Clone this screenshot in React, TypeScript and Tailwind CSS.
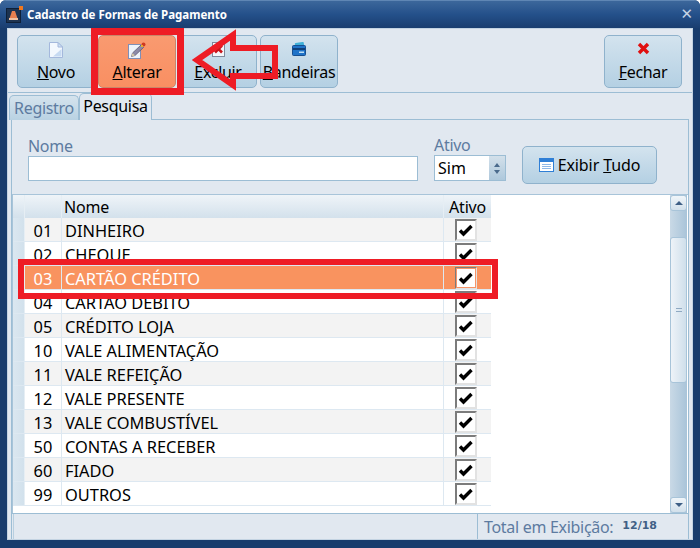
import React from "react";

const rows: [string, string][] = [
  ["01", "DINHEIRO"],
  ["02", "CHEQUE"],
  ["03", "CARTÃO CRÉDITO"],
  ["04", "CARTÃO DÉBITO"],
  ["05", "CRÉDITO LOJA"],
  ["10", "VALE ALIMENTAÇÃO"],
  ["11", "VALE REFEIÇÃO"],
  ["12", "VALE PRESENTE"],
  ["13", "VALE COMBUSTÍVEL"],
  ["50", "CONTAS A RECEBER"],
  ["60", "FIADO"],
  ["99", "OUTROS"],
];

function Check({ selected }: { selected: boolean }) {
  return (
    <div className={`relative mt-[1px] ml-[11px] w-[22px] h-[22px] border-2 bg-white border-t-[#7c7c7c] border-l-[#7c7c7c] border-r-[#e2e2e2] border-b-[#e2e2e2] ${selected ? "outline outline-1 -outline-offset-2 outline-[#f79468]" : ""}`}>
      <svg width="18" height="18" viewBox="0 0 18 18" className="absolute left-0 top-0">
        <path d="M3 9.500 L6.500 13 L14.500 5" fill="none" stroke="#000" strokeWidth="3.400" />
      </svg>
    </div>
  );
}

function NovoIcon() {
  return (
    <svg width="14" height="16" viewBox="0 0 14 16">
      <path d="M0.500 0.500H9L13.500 5V15.500H0.500Z" fill="#f3f8fe" stroke="#a4b8dc" />
      <path d="M9 0.500V5H13.500Z" fill="#cfe0f4" stroke="#a4b8dc" />
      <path d="M4 14.500L12.500 7V14.500Z" fill="#c6daf2" />
    </svg>
  );
}
function AlterarIcon() {
  return (
    <svg width="18" height="17" viewBox="0 0 18 17">
      <rect x="0.500" y="2.500" width="12" height="14" fill="#eef3fb" stroke="#7f8fb8" />
      <path d="M3.500 14.500L4.500 11L13 3L15.500 5.500L7 13.500Z" fill="#8d8aa8" stroke="#55506a" strokeWidth="0.700" />
      <path d="M3.500 14.500L4.500 11L7 13.500Z" fill="#d9c9a8" />
      <circle cx="15.500" cy="2.500" r="2" fill="#cf3a22" />
      <rect x="13" y="3" width="2" height="2" fill="#e0b030" />
    </svg>
  );
}
function ExcluirIcon() {
  return (
    <svg width="13" height="15" viewBox="0 0 13 15">
      <rect x="0.500" y="0.500" width="12" height="14" fill="#f4f7fb" stroke="#7f8a9c" />
      <path d="M3 3.500L10 10.500M10 3.500L3 10.500" stroke="#c8141a" strokeWidth="2.600" />
    </svg>
  );
}
function BandeirasIcon() {
  return (
    <svg width="14" height="14" viewBox="0 0 14 14">
      <rect x="3" y="0.500" width="9" height="6" rx="1" fill="#3fb0d8" transform="rotate(-8 7 3)" />
      <rect x="0.500" y="3.500" width="13" height="10" rx="1" fill="#1f73c8" stroke="#174f90" />
      <rect x="1" y="6" width="12" height="2" fill="#0f3f78" />
      <rect x="7" y="9.500" width="5" height="1.500" fill="#bfe0f5" />
    </svg>
  );
}
function FecharIcon() {
  return (
    <svg width="13" height="13" viewBox="0 0 13 13">
      <path d="M2 2L11 11M11 2L2 11" stroke="#e01010" strokeWidth="3.400" />
    </svg>
  );
}
function GridIcon() {
  return (
    <svg width="15" height="14" viewBox="0 0 15 14">
      <rect x="0.500" y="0.500" width="14" height="13" fill="#fff" stroke="#2f7fd6" />
      <rect x="1" y="1" width="13" height="3" fill="#2f7fd6" />
      <path d="M3 6.500H12M3 8.500H12M3 10.500H12" stroke="#8fb9e8" />
    </svg>
  );
}
function AppIcon() {
  return (
    <svg width="17" height="17" viewBox="0 0 17 17" className="mr-[4px]">
      <rect x="0.500" y="2.500" width="14" height="14" fill="#1d3350" stroke="#0e2038" />
      <path d="M6 5H9L12 14H3Z" fill="#e88050" />
      <rect x="3" y="12" width="9" height="2" fill="#f0c0a0" />
      <rect x="13" y="0" width="4" height="4" fill="#f0781e" />
    </svg>
  );
}

function ToolButton({ icon, u, post, active }: { icon: React.ReactNode; u: string; post: string; active?: boolean }) {
  return (
    <button
      className={`w-[78px] h-[53px] rounded-[5px] border flex flex-col items-center text-[16px] tracking-[-0.300px] leading-[20px] text-black ${
        active
          ? "border-[#c9866a] bg-gradient-to-b from-[#f99a70] to-[#f98f62]"
          : "border-[#8fb2cc] bg-gradient-to-b from-[#d3e3ee] to-[#b4d0e3]"
      }`}
    >
      <div className="h-[26px] pt-[6px] flex items-start justify-center">{icon}</div>
      <span>
        <span className="underline">{u}</span>
        {post}
      </span>
    </button>
  );
}

export default function App() {
  return (
    <div
      className="relative w-[700px] h-[548px] overflow-hidden bg-[#183c6d] flex flex-col rounded-t-[6px]"
      style={{ fontFamily: '"Noto Sans", "Open Sans", sans-serif' }}
    >
      <div className="h-[28px] shrink-0 flex items-center pl-[6px] pr-[7px] bg-gradient-to-b from-[#3c679b] via-[#24508a] to-[#1a3e70] border-t border-[#5f86b4]">
        <AppIcon />
        <span className="text-white font-bold text-[11.500px]">
          Cadastro de Formas de Pagamento
        </span>
        <span className="ml-auto text-[#c3d2e4] font-bold text-[15px] leading-none" style={{ fontFamily: '"DejaVu Sans", sans-serif' }}>✕</span>
      </div>

      <div className="mx-[7px] mb-[8px] flex-1 min-h-0 flex flex-col bg-[#e1e8f0] border border-[#c3d3e2]">
        <div className="h-[64px] shrink-0 flex items-center gap-[3px] pl-[9px] pr-[10px] border-b border-[#9cbdd4] pt-[1px]">
          <ToolButton icon={<NovoIcon />} u="N" post="ovo" />
          <ToolButton icon={<AlterarIcon />} u="A" post="lterar" active />
          <ToolButton icon={<ExcluirIcon />} u="E" post="xcluir" />
          <ToolButton icon={<BandeirasIcon />} u="B" post="andeiras" />
          <div className="flex-1" />
          <ToolButton icon={<FecharIcon />} u="F" post="echar" />
        </div>

        <div className="h-[27px] shrink-0 flex items-end pl-[1px] text-[16px] tracking-[-0.300px] leading-[25px] -mb-[1px] relative">
          <div className="w-[70px] h-[25px] rounded-t-[5px] border border-[#9cbdd4] border-b-0 bg-gradient-to-b from-[#d5e3ed] to-[#b9d2e3] text-center text-[#5d7ba0]">Registro</div>
          <div className="w-[73px] h-[27px] rounded-t-[5px] border border-[#9cbdd4] border-b-0 bg-[#e1e8f0] text-center text-black">Pesquisa</div>
        </div>

        <div className="flex-1 min-h-0 flex flex-col mx-[3px] border-t border-l border-r border-[#9cbdd4]">
          <div className="h-[74px] shrink-0 flex items-start pl-[16px]">
            <div className="flex flex-col pt-[16px]">
              <label className="text-[16px] tracking-[-0.300px] leading-[20px] text-[#5d7ba0]">Nome</label>
              <div className="w-[390px] h-[25px] bg-white border border-[#9cbdd4]" />
            </div>
            <div className="flex flex-col ml-[16px] pt-[15px]">
              <label className="text-[16px] tracking-[-0.300px] leading-[20px] text-[#5d7ba0]">Ativo</label>
              <div className="w-[72px] h-[26px] bg-white border border-[#9cbdd4] flex items-center text-[16px] text-black pl-[3px]">
                <span className="flex-1">Sim</span>
                <div className="w-[16px] h-full bg-gradient-to-b from-[#d3e0ea] to-[#aec8dc] flex items-center justify-center">
                  <svg width="8" height="13" viewBox="0 0 8 13"><path d="M4 1L7 5H1ZM4 12L7 8H1Z" fill="#4a6a8c" /></svg>
                </div>
              </div>
            </div>
            <button className="ml-[16px] mt-[26px] w-[135px] h-[38px] rounded-[5px] border border-[#8fb2cc] bg-gradient-to-b from-[#d3e3ee] to-[#b4d0e3] flex items-center justify-center gap-[4px] text-[16px] tracking-[-0.100px] text-black">
              <GridIcon />
              <span>Exibir <span className="underline">T</span>udo</span>
            </button>
          </div>

          <div className="h-[319px] shrink-0 bg-white border-t border-l border-[#a8c4d9] flex">
            <div className="flex-1 min-w-0 flex flex-col">
              <div className="h-[23px] shrink-0 w-[478px] flex text-[16px] tracking-[-0.200px] leading-[25px] text-black bg-gradient-to-b from-[#eff4f8] to-[#d3e1ec]">
                <div className="w-[12px] border-r border-[#e6eef4]" />
                <div className="w-[37px] border-r border-[#e6eef4]" />
                <div className="w-[382px] pl-[2px] border-r border-[#e6eef4]">Nome</div>
                <div className="flex-1 text-center">Ativo</div>
              </div>
              {rows.map(([code, name], i) => {
                const sel = i === 2;
                const bg = sel ? "bg-[#f9935f] text-white" : i % 2 === 0 ? "bg-[#f3f3f3] text-black" : "bg-white text-black";
                return (
                  <div key={code} className={`h-[24px] shrink-0 w-[478px] flex text-[16.400px] leading-[26px] border-b border-[#dde8f1] ${bg}`}>
                    <div className="w-[12px] bg-gradient-to-r from-[#dbe7f0] to-[#d2e1ec] border-r border-[#e6eef4]" />
                    <div className="w-[37px] text-center border-r border-[#dde8f1]">{code}</div>
                    <div className="w-[382px] pl-[3px] border-r border-[#dde8f1] whitespace-nowrap">{name}</div>
                    <div className="flex-1 flex justify-start items-start">
                      <Check selected={sel} />
                    </div>
                  </div>
                );
              })}
            </div>
            <div className="w-[17px] shrink-0 flex flex-col bg-gradient-to-r from-[#c9d9e6] to-[#a9c4d9] mr-[1px]">
              <div className="h-[16px] rounded-[3px] border border-[#a8c4d9] bg-gradient-to-b from-[#f0f5f9] to-[#d2e0eb] flex items-center justify-center">
                <svg width="8" height="4" viewBox="0 0 8 4"><path d="M4 0L8 4H0Z" fill="#3e5f85" /></svg>
              </div>
              <div className="h-[26px]" />
              <div className="h-[146px] rounded-[3px] border border-[#a8c4d9] bg-gradient-to-r from-[#eef3f8] to-[#cfdfeb] flex items-center justify-center">
                <div className="w-[6px] h-[4px] border-y border-[#8fa9c2]" />
              </div>
              <div className="flex-1" />
              <div className="h-[16px] rounded-[3px] border border-[#a8c4d9] bg-gradient-to-b from-[#f0f5f9] to-[#d2e0eb] flex items-center justify-center">
                <svg width="8" height="4" viewBox="0 0 8 4"><path d="M4 4L8 0H0Z" fill="#3e5f85" /></svg>
              </div>
            </div>
          </div>

          <div className="flex-1 min-h-0 flex border-t border-[#9cbdd4] text-[16px] tracking-[-0.300px] text-[#5d7ba0]">
            <div className="flex-1 border-l border-[#b7cfe0] ml-[1px]" />
            <div className="w-[211px] border-l border-[#9cbdd4] flex items-center pl-[6px] whitespace-nowrap">
              Total em Exibição:
              <span className="ml-[9px] font-bold text-[11px] tracking-normal text-[#3f5f85]" style={{ fontFamily: '"DejaVu Sans", sans-serif' }}>12/18</span>
            </div>
          </div>
        </div>
      </div>

      <div className="absolute left-[91px] top-[28px] w-[93px] h-[67px] border-[7px] border-[#ee1c25]" />
      <svg className="absolute left-[188px] top-[28px]" width="92" height="64" viewBox="0 0 92 64">
        <path d="M9 32L45 7V20H87V48H45V57Z" fill="none" stroke="#ee1c25" strokeWidth="6" />
      </svg>
      <div className="absolute left-[18px] top-[259px] w-[480px] h-[40px] border-[6px] border-[#ee1c25]" />
    </div>
  );
}
